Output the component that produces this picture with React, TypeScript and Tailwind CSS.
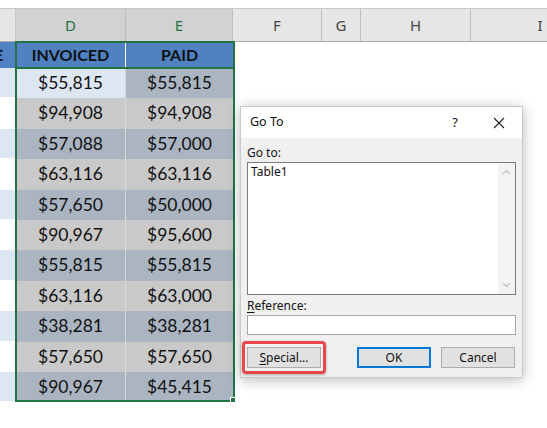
import React from "react";

const invoiced = [55815, 94908, 57088, 63116, 57650, 90967, 55815, 63116, 38281, 57650, 90967];
const paid = [55815, 94908, 57000, 63116, 50000, 95600, 55815, 63000, 38281, 57650, 45415];

const fmt = (n: number) => "$" + n.toLocaleString("en-US");

function ColumnHeaders() {
  return (
    <div className="flex h-[34px] bg-[#e6e6e6] border-t border-[#c8c8c8] border-b border-b-[#ababab] text-[15px] text-[#444]" style={{ fontFamily: '"Noto Sans", "Open Sans", sans-serif' }}>
      <div className="w-[16px] shrink-0 border-r border-[#c6c6c6]" />
      <div className="w-[110px] shrink-0 flex items-center justify-center bg-[#d2d2d2] text-[#217346] border-r border-[#bdbdbd]">D</div>
      <div className="w-[107px] shrink-0 flex items-center justify-center bg-[#d2d2d2] text-[#217346] border-r border-[#bdbdbd]">E</div>
      <div className="w-[89px] shrink-0 flex items-center justify-center border-r border-[#bdbdbd]">F</div>
      <div className="w-[39px] shrink-0 flex items-center justify-center border-r border-[#bdbdbd]">G</div>
      <div className="w-[110px] shrink-0 flex items-center justify-center border-r border-[#bdbdbd]">H</div>
      <div className="w-[138px] shrink-0 flex items-center justify-center">I</div>
    </div>
  );
}

function Sheet() {
  return (
    <div className="relative" style={{ fontFamily: 'Lato, "Open Sans", sans-serif' }}>
      {/* table header */}
      <div className="flex h-[26px]">
        <div className="w-[16px] shrink-0 bg-[#4f81c3] overflow-hidden flex items-center">
          <span className="font-bold text-[16px] text-[#111] ml-[-6px]">E</span>
        </div>
        <div className="w-[110px] shrink-0 bg-[#4f81c3] border-r border-white flex items-center justify-center font-bold text-[16px] text-[#111]">INVOICED</div>
        <div className="w-[107px] shrink-0 bg-[#4f81c3] flex items-center justify-center font-bold text-[16px] text-[#111]">PAID</div>
      </div>
      {invoiced.map((v, i) => {
        const odd = i % 2 === 0;
        return (
          <div key={i} className="flex h-[30.4px]">
            <div className={`w-[16px] shrink-0 border-b border-white ${odd ? "bg-[#dde7f3]" : "bg-white"}`} />
            <div
              className={`w-[110px] shrink-0 flex items-center justify-center text-[17.5px] text-[#111] border-r border-[#d8d8d8] ${
                i === 0 ? "bg-[#dde7f2]" : odd ? "bg-[#abb5c1]" : "bg-[#c9c9c9]"
              }`}
            >
              {fmt(v)}
            </div>
            <div className={`w-[107px] shrink-0 flex items-center justify-center text-[17.5px] text-[#111] ${odd ? "bg-[#abb5c1]" : "bg-[#c9c9c9]"}`}>
              {fmt(paid[i])}
            </div>
          </div>
        );
      })}
      {/* selection outline */}
      <div className="absolute left-[15px] top-[-1px] w-[220px] h-[361px] border-2 border-[#217346] pointer-events-none" />
      <div className="absolute left-[15px] top-[25px] w-[220px] h-[2px] bg-[#217346]" />
      <div className="absolute left-[230px] top-[355px] w-[6px] h-[6px] bg-[#217346] border border-white" />
    </div>
  );
}

function GoToDialog() {
  return (
    <div
      className="absolute left-[240px] top-[106px] w-[283px] bg-[#f0f0f0] border border-[#c9c9c9] shadow-[0_2px_12px_rgba(0,0,0,0.28)] text-[12px] text-[#111]"
      style={{ fontFamily: '"Noto Sans", "Open Sans", sans-serif' }}
    >
      <div className="h-[31px] bg-white flex items-center pl-[9px]">
        <span className="text-[12.5px]">Go To</span>
        <span className="ml-auto mr-[35px] text-[13px]">?</span>
        <svg className="mr-[17px]" width="12" height="12" viewBox="0 0 12 12">
          <path d="M1 1L11 11M11 1L1 11" stroke="#222" strokeWidth="1.1" fill="none" />
        </svg>
      </div>
      <div className="px-[6px] pb-[9px] flex flex-col">
        <div className="mt-[7px] leading-[16px]">Go to:</div>
        <div className="mt-[1px] h-[133px] bg-white border border-[#7a7a7a] flex">
          <div className="flex-1 pl-[3px] pt-[1px] leading-[16px]">Table1</div>
          <div className="w-[17px] bg-[#f3f3f3] flex flex-col items-center justify-between py-[6px]">
            <svg width="9" height="6" viewBox="0 0 9 6">
              <path d="M1 5L4.5 1.5L8 5" stroke="#c2c2c2" strokeWidth="1.3" fill="none" />
            </svg>
            <svg width="9" height="6" viewBox="0 0 9 6">
              <path d="M1 1L4.5 4.5L8 1" stroke="#c2c2c2" strokeWidth="1.3" fill="none" />
            </svg>
          </div>
        </div>
        <div className="mt-[3px] leading-[16px]">
          <span className="underline underline-offset-2">R</span>eference:
        </div>
        <div className="mt-[1px] h-[20px] bg-white border border-[#a8a8a8]" />
        <div className="mt-[12px] flex items-center">
          <div className="rounded-[4px] border-[3px] border-[#e9474b] p-[2px] -mx-[5px] -my-[6px] py-[3px] shadow-[0_1px_3px_rgba(0,0,0,0.3)]">
            <div className="w-[74px] h-[21px] bg-[#e1e1e1] border border-[#adadad] flex items-center justify-center">
              <span><span className="underline underline-offset-2">S</span>pecial...</span>
            </div>
          </div>
          <div className="ml-[36px] w-[74px] h-[21px] bg-[#e1e1e1] border-2 border-[#0078d7] flex items-center justify-center">OK</div>
          <div className="ml-[10px] w-[74px] h-[21px] bg-[#e1e1e1] border border-[#adadad] flex items-center justify-center">Cancel</div>
        </div>
      </div>
    </div>
  );
}

export default function App() {
  return (
    <div className="relative w-[547px] h-[428px] overflow-hidden bg-white">
      <div className="h-[8px]" />
      <ColumnHeaders />
      <Sheet />
      <GoToDialog />
    </div>
  );
}
